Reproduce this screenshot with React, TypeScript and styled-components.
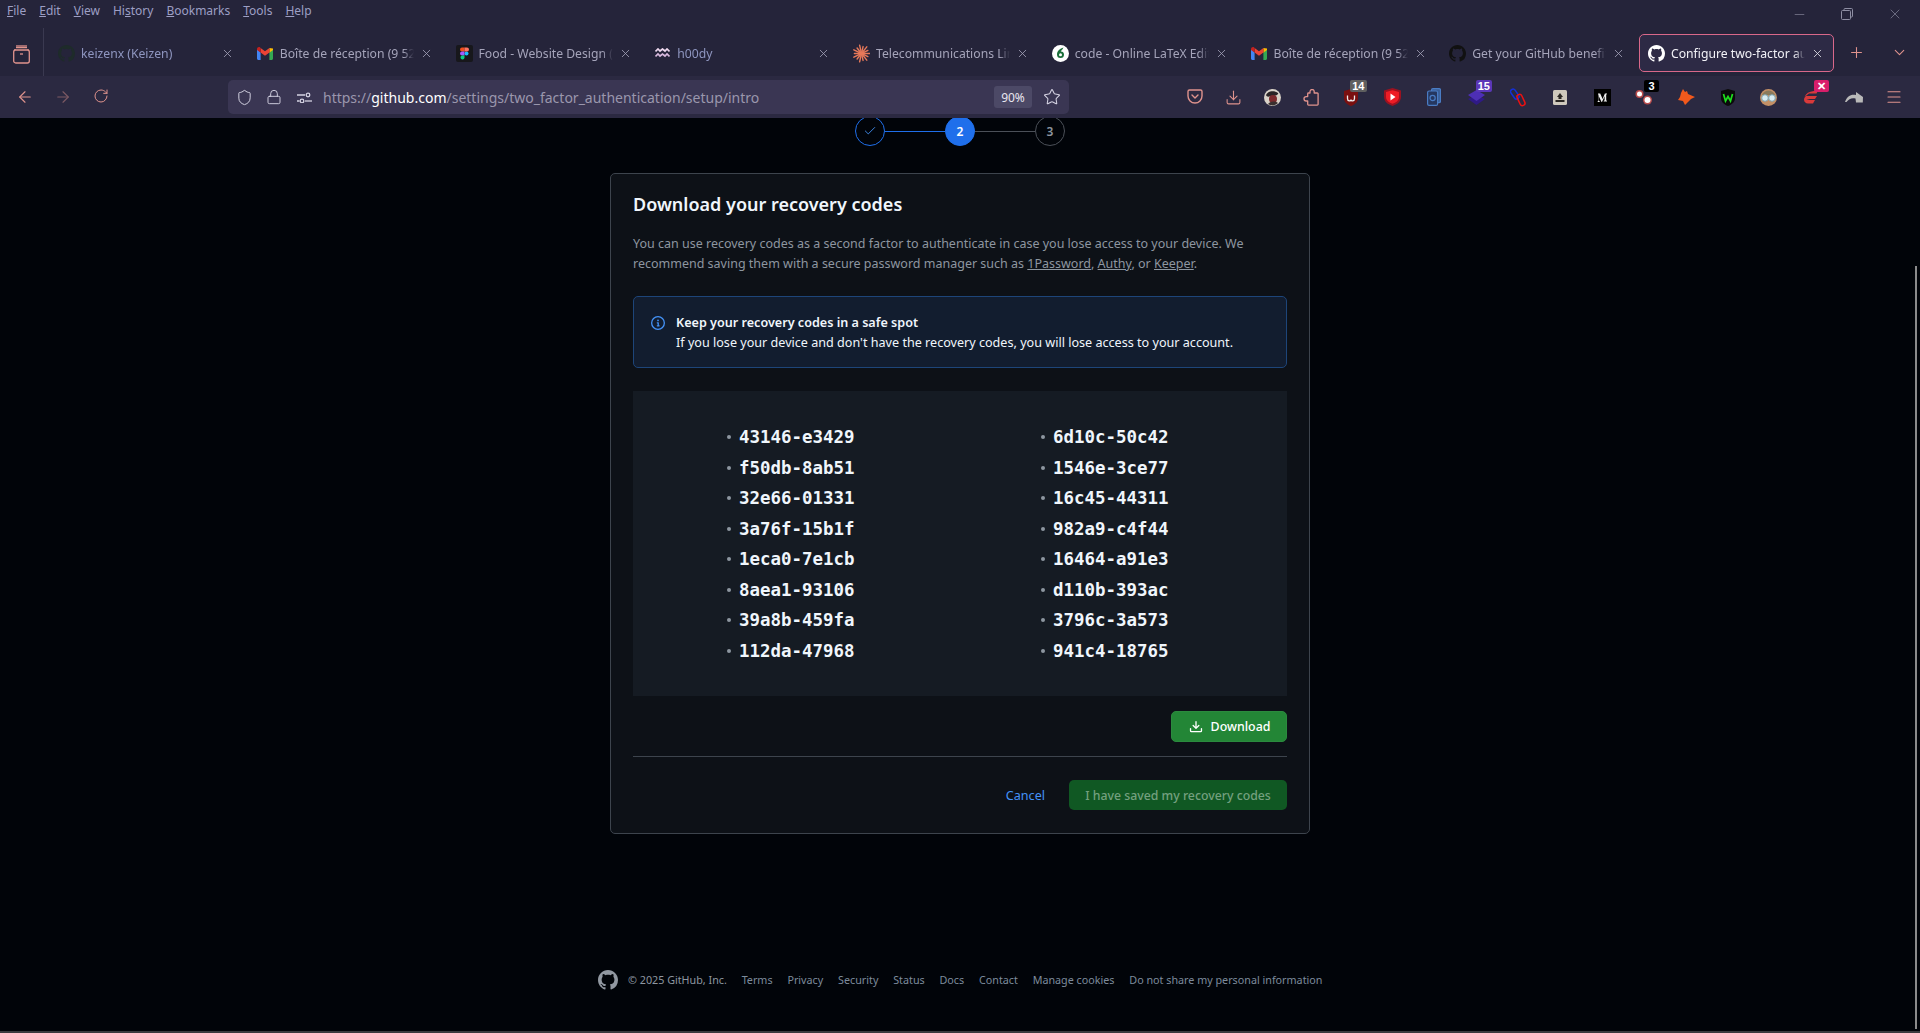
import React from 'react';
import styled, { createGlobalStyle } from 'styled-components';
import { ArrowLeft, ArrowRight, RotateCw, Shield, Lock, Star, Plus, ChevronDown, X, Minus, Menu, Check, Download } from 'lucide-react';

const GITHUB_PATH = 'M8 0C3.58 0 0 3.58 0 8c0 3.54 2.29 6.53 5.47 7.59.4.07.55-.17.55-.38 0-.19-.01-.82-.01-1.49-2.01.37-2.53-.49-2.69-.94-.09-.23-.48-.94-.82-1.13-.28-.15-.68-.52-.01-.53.63-.01 1.08.58 1.23.82.72 1.21 1.87.87 2.33.66.07-.52.28-.87.51-1.07-1.78-.2-3.64-.89-3.64-3.95 0-.87.31-1.59.82-2.15-.08-.2-.36-1.02.08-2.12 0 0 .67-.21 2.2.82.64-.18 1.32-.27 2-.27s1.36.09 2 .27c1.53-1.04 2.2-.82 2.2-.82.44 1.1.16 1.92.08 2.12.51.56.82 1.27.82 2.15 0 3.07-1.87 3.75-3.65 3.95.29.25.54.73.54 1.48 0 1.07-.01 1.93-.01 2.2 0 .21.15.46.55.38A8.01 8.01 0 0 0 16 8c0-4.42-3.58-8-8-8z';

const GlobalStyle = createGlobalStyle`
  html, body {
    margin: 0;
    padding: 0;
    background: #010409;
    overflow: hidden;
  }
  * { box-sizing: border-box; }
`;

const Page = styled.div`
  width: 1920px;
  height: 1033px;
  display: flex;
  flex-direction: column;
  position: relative;
  overflow: hidden;
  font-family: "Noto Sans", "Open Sans", sans-serif;
`;

/* browser chrome */
const Chrome = styled.header`
  position: relative;
  z-index: 2;
  flex: none;
  background: #25243a;
`;

const MenuBar = styled.nav`
  height: 28px;
  display: flex;
  align-items: center;
  padding-left: 7px;
  gap: 13px;
  font-size: 12px;
  color: #9d9fc4;
`;

const MenuItem = styled.span`
  padding-bottom: 8px;
`;

const WindowControls = styled.div`
  margin-left: auto;
  padding-right: 1px;
  display: flex;
  align-items: center;
  color: #8e8ea3;
`;

const WindowButton = styled.span`
  width: 48px;
  display: flex;
  justify-content: center;
`;

const TabRow = styled.div`
  height: 48px;
  display: flex;
  align-items: center;
`;

const SideButton = styled.div`
  width: 44px;
  height: 48px;
  flex: none;
  display: flex;
  align-items: center;
  justify-content: center;
  padding-top: 5px;
  border-right: 1px solid #3a3950;
`;

const Tabs = styled.div`
  display: flex;
  gap: 3.75px;
  padding: 6px 0 4px 5px;
`;

const Tab = styled.div<{ $active?: boolean }>`
  width: 195px;
  height: 38px;
  flex: none;
  display: flex;
  align-items: center;
  gap: 6px;
  padding: 0 9px 0 8px;
  border: 1px solid ${({ $active }) => ($active ? '#d9688a' : 'transparent')};
  border-radius: 5px;
  background: ${({ $active }) => ($active ? '#2d2a45' : 'transparent')};
`;

const Favicon = styled.span`
  width: 17px;
  height: 17px;
  flex: none;
  display: flex;
  align-items: center;
  justify-content: center;
`;

const TabTitle = styled.span<{ $active?: boolean; $blue?: boolean }>`
  flex: 1;
  min-width: 0;
  overflow: hidden;
  white-space: nowrap;
  font-size: 12.2px;
  color: ${({ $active, $blue }) => ($active ? '#f2f2f7' : $blue ? '#8f96c0' : '#a5a4ba')};
  mask-image: linear-gradient(to right, #000 92%, transparent 100%);
`;

const TabClose = styled(X)<{ $active?: boolean }>`
  width: 13px;
  height: 13px;
  flex: none;
  color: ${({ $active }) => ($active ? '#e6e6ee' : '#a5a4ba')};
`;

const TabEnd = styled.div`
  flex: none;
  display: flex;
  align-items: center;
  color: #e0938d;
  padding: 0 0 0 14px;
  gap: 26px;
`;

const Toolbar = styled.div`
  height: 42px;
  display: flex;
  align-items: center;
  background: #2b2941;
  color: #e0938d;
`;

const NavButton = styled.span<{ $dim?: boolean }>`
  width: 38px;
  flex: none;
  display: flex;
  justify-content: center;
  opacity: ${({ $dim }) => ($dim ? 0.45 : 1)};
`;

const NavGroup = styled.div`
  flex: none;
  width: 228px;
  padding-left: 6px;
  display: flex;
`;

const UrlBar = styled.div`
  width: 841px;
  height: 34px;
  flex: none;
  display: flex;
  align-items: center;
  padding: 0 8px 0 1px;
  border-radius: 5px;
  background: #3a3653;
  color: #d5d3e3;
`;

const UrlIcon = styled.span`
  width: 30px;
  flex: none;
  display: flex;
  justify-content: center;
`;

const UrlText = styled.span`
  flex: 1;
  margin-left: 4px;
  font-size: 14px;
  white-space: nowrap;
  color: #9a97ad;
  b { font-weight: 400; color: #fff; }
`;

const ZoomPill = styled.span`
  width: 38px;
  height: 22px;
  display: flex;
  align-items: center;
  justify-content: center;
  border-radius: 3px;
  background: #4c4966;
  font-size: 12px;
  color: #e8e7f0;
  margin-right: 11px;
`;

const Extensions = styled.div`
  flex: none;
  margin-left: 107px;
  display: flex;
  align-items: center;
`;

const Extension = styled.span<{ $w: number }>`
  position: relative;
  width: ${({ $w }) => $w}px;
  height: 30px;
  flex: none;
  display: flex;
  align-items: center;
  justify-content: center;
`;

const Badge = styled.span<{ $bg: string; $right?: number }>`
  position: absolute;
  top: -2px;
  right: ${({ $right }) => $right ?? 3}px;
  min-width: 15px;
  height: 12px;
  padding: 0 2px;
  border-radius: 2px;
  background: ${({ $bg }) => $bg};
  color: #fff;
  font-family: "Liberation Sans", sans-serif;
  font-size: 11px;
  font-weight: 700;
  line-height: 12px;
  text-align: center;
`;

/* github page */
const Main = styled.main`
  flex: 1;
  display: flex;
  flex-direction: column;
  align-items: center;
  background: #010409;
  border-bottom: 2px solid #3a3a3f;
`;

const Stepper = styled.div`
  margin-top: -2px;
  display: flex;
  align-items: center;
`;

const StepCircle = styled.span<{ $state: 'done' | 'current' | 'todo' }>`
  width: 30px;
  height: 30px;
  flex: none;
  display: flex;
  align-items: center;
  justify-content: center;
  border-radius: 50%;
  border: 1px solid ${({ $state }) => ($state === 'todo' ? '#4b5058' : '#1f6feb')};
  background: ${({ $state }) => ($state === 'current' ? '#1f6feb' : 'transparent')};
  color: ${({ $state }) => ($state === 'current' ? '#fff' : $state === 'done' ? '#4493f8' : '#8d96a0')};
  font-size: 12px;
  font-weight: 600;
`;

const StepLine = styled.span<{ $on?: boolean }>`
  width: 60px;
  height: 1px;
  background: ${({ $on }) => ($on ? '#1f6feb' : '#4b5058')};
`;

const Card = styled.section`
  width: 700px;
  margin-top: 27px;
  padding: 19px 22px 23px;
  background: #0d1117;
  border: 1px solid #3d444d;
  border-radius: 5px;
`;

const Heading = styled.h2`
  margin: 0;
  font-size: 18px;
  line-height: 22px;
  font-weight: 600;
  color: #f0f6fc;
`;

const Lead = styled.p`
  margin: 19px 0 0;
  font-size: 12.5px;
  line-height: 20px;
  color: #8d96a0;
  a { color: inherit; text-decoration: underline; }
`;

const InfoBox = styled.div`
  height: 72px;
  margin-top: 22px;
  padding: 16px 17px 14px;
  display: flex;
  gap: 11px;
  background: #121d2f;
  border: 1px solid #1d4579;
  border-radius: 5px;
  font-size: 12.6px;
  line-height: 20px;
  color: #f0f6fc;
  strong { display: block; font-weight: 600; }
`;

const InfoIcon = styled.span`
  width: 14px;
  height: 20px;
  flex: none;
  display: flex;
  align-items: center;
  color: #4493f8;
`;

const CodesBox = styled.ul`
  height: 305px;
  margin: 23px 0 0;
  padding: 30.75px 0 0 95px;
  list-style: none;
  display: grid;
  grid-template-columns: 314px 1fr;
  grid-auto-rows: 30.5px;
  grid-auto-flow: column;
  grid-template-rows: repeat(8, 30.5px);
  background: #151b23;
`;

const Code = styled.li`
  display: flex;
  align-items: center;
  font-family: "DejaVu Sans Mono", "Liberation Mono", monospace;
  font-size: 17.45px;
  font-weight: 700;
  color: #f0f6fc;
  &::before {
    content: '';
    width: 4px;
    height: 4px;
    margin-right: 8px;
    margin-left: -1px;
    border-radius: 50%;
    background: #8d96a0;
  }
`;

const DownloadRow = styled.div`
  margin-top: 15px;
  padding-bottom: 14px;
  display: flex;
  justify-content: flex-end;
  border-bottom: 1px solid #3d444d;
`;

const DownloadButton = styled.button`
  width: 116px;
  height: 31px;
  display: flex;
  align-items: center;
  justify-content: center;
  gap: 8px;
  padding: 0 0 0 1px;
  border: 1px solid #2b8a3e;
  border-radius: 5px;
  background: #238636;
  color: #fff;
  font-family: inherit;
  font-size: 12.4px;
  font-weight: 500;
`;

const ActionRow = styled.div`
  margin-top: 23px;
  display: flex;
  align-items: center;
  justify-content: flex-end;
  gap: 24px;
`;

const CancelLink = styled.a`
  font-size: 12.6px;
  color: #4493f8;
`;

const SavedButton = styled.button`
  width: 218px;
  height: 30px;
  padding: 0;
  border: 0;
  border-radius: 5px;
  background: #105823;
  color: #74a07f;
  font-family: inherit;
  font-size: 12.3px;
  font-weight: 500;
`;

const Footer = styled.footer`
  margin-top: 136px;
  width: 724px;
  height: 20px;
  display: flex;
  align-items: center;
  white-space: nowrap;
  font-size: 10.75px;
  color: #8d96a0;
  svg { flex: none; margin-right: 10px; color: #9198a1; }
`;

const FooterLink = styled.a`
  margin-left: 14.8px;
  color: #7d8b9c;
`;

const Scrollbar = styled.div`
  position: absolute;
  right: 3px;
  top: 266px;
  bottom: 4px;
  width: 2px;
  background: #8b8b8b;
`;

/* drawn icons */
const GithubMark = ({ size = 17, color = 'currentColor' }: { size?: number; color?: string }) => (
  <svg width={size} height={size} viewBox="0 0 16 16" fill={color}><path d={GITHUB_PATH} /></svg>
);

const Gmail = () => (
  <svg width="16" height="13" viewBox="0 0 16 13">
    <path d="M0 2v9.5C0 12.3.7 13 1.500 13H3.600V5.500z" fill="#4285f4" />
    <path d="M16 2v9.500c0 .8-.7 1.500-1.500 1.500h-2.100V5.500z" fill="#34a853" />
    <path d="M12.400 1 16 1.500V3l-3.600 2.700z" fill="#fbbc04" />
    <path d="M3.600 5.500 8 8.800l4.400-3.300V1L8 4.300 3.600 1z" fill="#ea4335" />
    <path d="M0 3V2C0 .4 1.900-.5 3.100.4l.5.6v4.500z" fill="#c5221f" />
  </svg>
);

const FigmaIcon = () => (
  <svg width="17" height="17" viewBox="0 0 17 17">
    <rect width="17" height="17" rx="2" fill="#17171b" />
    <circle cx="10.500" cy="8.500" r="2" fill="#1abcfe" />
    <path d="M6 2.500h2.500v4H6a2 2 0 0 1 0-4z" fill="#f24e1e" />
    <path d="M8.500 2.500H11a2 2 0 0 1 0 4H8.500z" fill="#ff7262" />
    <path d="M6 6.500h2.500v4H6a2 2 0 0 1 0-4z" fill="#a259ff" />
    <path d="M6 10.500h2.500v2a2 2 0 1 1-2.500-2z" fill="#0acf83" />
  </svg>
);

const HoodyIcon = () => (
  <svg width="15" height="10" viewBox="0 0 15 10" fill="none" strokeWidth="1.700">
    <path d="M.5 3.500 3 1l2 2 2.500-2L10 3l2-2 2.500 2.500" stroke="#efd9ef" />
    <path d="M.5 8.500 3 6l2 2 2.500-2L10 8l2-2 2.500 2.500" stroke="#d9b9de" />
  </svg>
);

const SunburstIcon = () => (
  <svg width="17" height="19" viewBox="-9 -10 18 20" stroke="#e8795a" strokeWidth="1.500" strokeLinecap="round">
    {Array.from({ length: 14 }, (_, i) => {
      const a = (i / 14) * Math.PI * 2;
      const r = i % 2 ? 7.5 : 9;
      return <line key={i} x1={0} y1={0} x2={Math.cos(a) * r} y2={Math.sin(a) * r} />;
    })}
  </svg>
);

const OverleafIcon = () => (
  <svg width="17" height="17" viewBox="0 0 17 17">
    <circle cx="8.500" cy="8.500" r="8.500" fill="#fff" />
    <path d="M11.500 2.500C8 3.500 5 6 5 9.500a3.500 3.500 0 0 0 7 0c0-2-1.500-3.200-3.300-3 1-1.300 1.900-2.200 2.800-4z" fill="#1b6f3a" />
    <circle cx="8.500" cy="9.700" r="1.500" fill="#fff" />
  </svg>
);

const SideIcon = () => (
  <svg width="17" height="19" viewBox="0 0 17 19" fill="none" stroke="#e0938d" strokeWidth="1.300">
    <rect x=".7" y="5" width="15.600" height="13" rx="2" />
    <path d="M3 2.600h11M2 5V4M15 5V4" />
    <path d="M3 1h11" />
    <path d="M7 9h3" />
  </svg>
);

const PermissionIcon = () => (
  <svg width="15" height="11" viewBox="0 0 15 11" fill="none" stroke="#d5d3e3" strokeWidth="1.300">
    <path d="M0 3h8M0 9h2.500" />
    <circle cx="11" cy="3" r="1.800" />
    <circle cx="5" cy="9" r="1.800" />
    <path d="M8 9h7" />
  </svg>
);

const PocketIcon = () => (
  <svg width="16" height="16" viewBox="0 0 16 16" fill="none" stroke="#e0938d" strokeWidth="1.400" strokeLinecap="round" strokeLinejoin="round">
    <path d="M1 2.500A1.500 1.500 0 0 1 2.500 1h11A1.500 1.500 0 0 1 15 2.500V7A7 7 0 0 1 1 7z" />
    <path d="m5 6 3 3 3-3" />
  </svg>
);

const PuzzleIcon = () => (
  <svg width="16" height="17" viewBox="0 0 16 17" fill="none" stroke="#e0938d" strokeWidth="1.300" strokeLinejoin="round">
    <path d="M7 4V2.600a2.100 2.100 0 0 1 4.200 0V4h3.100a.8.800 0 0 1 .8.800v10.500a.8.800 0 0 1-.8.800H5.500a.8.800 0 0 1-.8-.8V12H3.200a2.200 2.200 0 0 1 0-4.400h1.500V4.800A.8.800 0 0 1 5.500 4z" />
  </svg>
);

const AvatarIcon = () => (
  <svg width="17" height="17" viewBox="0 0 17 17">
    <circle cx="8.500" cy="8.500" r="8.500" fill="#d9d2c8" />
    <path d="M2 6c2-4 8-5 12-2 1 1-2 3-5 3S3 9 2 6z" fill="#2a2426" />
    <circle cx="9" cy="10" r="4" fill="#7c2a2d" />
    <path d="M4 15c2-3 7-3 10-1-3 3-7 3-10 1z" fill="#3a2f2f" />
  </svg>
);

const UblockIcon = () => (
  <svg width="14" height="17" viewBox="0 0 14 17">
    <path d="M7 0 14 2v7c0 4-3 6.500-7 8-4-1.500-7-4-7-8V2z" fill="#7a1010" />
    <path d="M3.500 6.500v3c0 3 3.500 3 3.500 1 0 2 3.500 2 3.500-1v-3" stroke="#eee" fill="none" strokeWidth="1.300" />
  </svg>
);

const YoutubeShield = () => (
  <svg width="17" height="18" viewBox="0 0 17 18">
    <path d="M8.500 0 17 2.500V9c0 4.500-4 7.500-8.500 9C4 16.500 0 13.500 0 9V2.500z" fill="#9c1220" />
    <path d="M8.500 2.200 15 4v5c0 3.300-3 5.500-6.500 6.800C5 14.500 2 12.300 2 9V4z" fill="#ee1c25" />
    <path d="m6.500 5.500 5 3.500-5 3.500z" fill="#fff" />
  </svg>
);

const BlueStack = () => (
  <svg width="14" height="18" viewBox="0 0 14 18" fill="none" stroke="#4a7cc4" strokeWidth="1.200">
    <rect x="4.500" y=".6" width="9" height="14" rx="1.500" fill="#3a5f98" />
    <rect x=".6" y="3" width="10" height="14.400" rx="1.500" fill="#25375f" />
    <circle cx="5.600" cy="10" r="2.600" />
  </svg>
);

const PurpleStack = () => (
  <svg width="17" height="16" viewBox="0 0 17 16">
    <path d="M8.500 6 17 10l-8.500 6L0 10z" fill="#2f1a86" />
    <path d="M8.500 1 17 6l-8.500 6L0 6z" fill="#4d2fb5" />
  </svg>
);

const LinkIcon = () => (
  <svg width="17" height="19" viewBox="0 0 17 19" fill="none" strokeWidth="1.500">
    <rect x="-1.900" y="-5" width="5" height="11" rx="2.500" transform="translate(4 6) rotate(-35)" stroke="#1430d8" />
    <rect x="-2.500" y="-6" width="5" height="12" rx="2.500" transform="translate(11 12) rotate(-25)" stroke="#ee1111" />
  </svg>
);

const StampIcon = () => (
  <svg width="14" height="15" viewBox="0 0 14 15">
    <rect width="14" height="15" rx="1.500" fill="#cfc8bc" />
    <path d="M7 3 10 7H8.500v2h-3V7H4zM2.500 10h9v2h-9z" fill="#2a2622" />
  </svg>
);

const MediumIcon = () => (
  <svg width="17" height="17" viewBox="0 0 17 17">
    <rect width="17" height="17" fill="#000" />
    <path d="M4 4.500h2.200L8.600 10l2.300-5.500H13v.6l-.8.6v5.600l.8.6v.6H9.700v-.6l.9-.6V7.300L8 13h-.5L4.800 7.300v4.300l1 .8v.6H3.600v-.6l.9-.8V5.900L4 5.100z" fill="#eee" />
  </svg>
);

const DotsIcon = () => (
  <svg width="18" height="16" viewBox="0 0 18 16">
    <circle cx="4.500" cy="5" r="4" fill="#b84b4b" />
    <circle cx="4.500" cy="5" r="2.500" fill="#fff" />
    <circle cx="12.500" cy="11" r="4.500" fill="#b84b4b" />
    <circle cx="12.500" cy="11" r="3" fill="#fff" />
  </svg>
);

const FoxIcon = () => (
  <svg width="17" height="16" viewBox="0 0 17 16">
    <path d="M5 0l2 3 2-1 1 3 7 3-4 2-3 3-3 3-2-4-5-1 2-3 1-4z" fill="#f2591c" />
  </svg>
);

const WShield = () => (
  <svg width="14" height="17" viewBox="0 0 14 17">
    <path d="M7 0 14 2v7c0 4-3 6.500-7 8-4-1.500-7-4-7-8V2z" fill="#0b0b0b" />
    <path d="M2.500 5 4.500 12 7 7.500 9.500 12l2-7" fill="none" stroke="#1ee01e" strokeWidth="1.700" />
  </svg>
);

const GogglesIcon = () => (
  <svg width="17" height="17" viewBox="0 0 17 17">
    <circle cx="8.500" cy="8.500" r="8.500" fill="#c39066" />
    <path d="M2 6c2-6 11-6 13 0z" fill="#8a7a5c" />
    <circle cx="5" cy="9" r="3.300" fill="#d9ecf2" stroke="#7fa7b5" />
    <circle cx="12" cy="9" r="3.300" fill="#d9ecf2" stroke="#7fa7b5" />
  </svg>
);

const RedStripes = () => (
  <svg width="17" height="14" viewBox="0 0 17 14">
    <path d="M3 4.500C5 2 9 .8 15 .5l-1.500 3H6L1.500 7z" fill="#d93a3a" />
    <path d="M3 6h11l-2 3H3.500C5 10 8 10 12 10l-2 3.500H5C1 13.500-.5 9 3 6z" fill="#d93a3a" />
  </svg>
);

const ArrowExt = () => (
  <svg width="18" height="12" viewBox="0 0 18 12">
    <path d="M0 11C2 5 6 3 11 4V1l7 5-.2 5.500H11l-.5-4C7 6.500 4 7.500 1.500 11z" fill="#b9b9b9" />
  </svg>
);

const MENUS: React.ReactNode[] = [
  <><u>F</u>ile</>, <><u>E</u>dit</>, <><u>V</u>iew</>, <>Hi<u>s</u>tory</>,
  <><u>B</u>ookmarks</>, <><u>T</u>ools</>, <><u>H</u>elp</>,
];

const TABS: { title: string; icon: React.ReactNode; blue?: boolean; active?: boolean }[] = [
  { title: 'keizenx (Keizen)', icon: <GithubMark color="#1e2b2a" />, blue: true },
  { title: 'Boîte de réception (9 526) - keizenx', icon: <Gmail /> },
  { title: 'Food - Website Design (Community)', icon: <FigmaIcon /> },
  { title: 'h00dy', icon: <HoodyIcon />, blue: true },
  { title: 'Telecommunications Link Budget', icon: <SunburstIcon /> },
  { title: 'code - Online LaTeX Editor Overleaf', icon: <OverleafIcon /> },
  { title: 'Boîte de réception (9 526) - keizenx', icon: <Gmail /> },
  { title: 'Get your GitHub benefits', icon: <GithubMark color="#111" /> },
  { title: 'Configure two-factor authentication', icon: <GithubMark color="#fff" />, active: true },
];

const EXTENSIONS: { w: number; icon: React.ReactNode; badge?: string; bg?: string; right?: number }[] = [
  { w: 38.5, icon: <PocketIcon /> },
  { w: 38.5, icon: <Download size={17} strokeWidth={1.5} /> },
  { w: 38.5, icon: <AvatarIcon /> },
  { w: 39.5, icon: <PuzzleIcon /> },
  { w: 40.5, icon: <UblockIcon />, badge: '14', bg: '#5f5f5f', right: 5 },
  { w: 41.5, icon: <YoutubeShield /> },
  { w: 42, icon: <BlueStack /> },
  { w: 42, icon: <PurpleStack />, badge: '15', bg: '#5b37b8', right: 5 },
  { w: 42, icon: <LinkIcon /> },
  { w: 42, icon: <StampIcon /> },
  { w: 42, icon: <MediumIcon /> },
  { w: 42, icon: <DotsIcon />, badge: '3', bg: '#000', right: 6 },
  { w: 42, icon: <FoxIcon /> },
  { w: 41, icon: <WShield /> },
  { w: 41, icon: <GogglesIcon /> },
  { w: 44, icon: <RedStripes />, badge: '✕', bg: '#d81e6a', right: 4 },
  { w: 41, icon: <ArrowExt /> },
  { w: 39, icon: <Menu size={18} strokeWidth={1.5} /> },
];

const CODES = [
  '43146-e3429', 'f50db-8ab51', '32e66-01331', '3a76f-15b1f',
  '1eca0-7e1cb', '8aea1-93106', '39a8b-459fa', '112da-47968',
  '6d10c-50c42', '1546e-3ce77', '16c45-44311', '982a9-c4f44',
  '16464-a91e3', 'd110b-393ac', '3796c-3a573', '941c4-18765',
];

const FOOTER_LINKS = ['Terms', 'Privacy', 'Security', 'Status', 'Docs', 'Contact', 'Manage cookies', 'Do not share my personal information'];

export default function App() {
  return (
    <Page>
      <GlobalStyle />
      <Chrome>
        <MenuBar>
          {MENUS.map((m, i) => <MenuItem key={i}>{m}</MenuItem>)}
          <WindowControls>
            <WindowButton><Minus size={15} strokeWidth={1} /></WindowButton>
            <WindowButton>
              <svg width="12" height="12" viewBox="0 0 12 12" fill="none" stroke="currentColor"><rect x=".5" y="2.500" width="9" height="9" rx="1" /><path d="M3 2.500V1.500a1 1 0 0 1 1-1h6.500a1 1 0 0 1 1 1V8a1 1 0 0 1-1 1h-1" /></svg>
            </WindowButton>
            <WindowButton><X size={16} strokeWidth={1} /></WindowButton>
          </WindowControls>
        </MenuBar>
        <TabRow>
          <SideButton><SideIcon /></SideButton>
          <Tabs>
            {TABS.map((t, i) => (
              <Tab key={i} $active={t.active}>
                <Favicon>{t.icon}</Favicon>
                <TabTitle $active={t.active} $blue={t.blue}>{t.title}</TabTitle>
                <TabClose $active={t.active} strokeWidth={1.5} />
              </Tab>
            ))}
          </Tabs>
          <TabEnd>
            <Plus size={17} strokeWidth={1.5} />
            <ChevronDown size={17} strokeWidth={1.5} />
          </TabEnd>
        </TabRow>
        <Toolbar>
          <NavGroup>
            <NavButton><ArrowLeft size={18} strokeWidth={1.5} /></NavButton>
            <NavButton $dim><ArrowRight size={18} strokeWidth={1.5} /></NavButton>
            <NavButton><RotateCw size={16} strokeWidth={1.5} /></NavButton>
          </NavGroup>
          <UrlBar>
            <UrlIcon><Shield size={17} strokeWidth={1.4} /></UrlIcon>
            <UrlIcon><Lock size={16} strokeWidth={1.4} /></UrlIcon>
            <UrlIcon><PermissionIcon /></UrlIcon>
            <UrlText>https://<b>github.com</b>/settings/two_factor_authentication/setup/intro</UrlText>
            <ZoomPill>90%</ZoomPill>
            <Star size={18} strokeWidth={1.4} />
          </UrlBar>
          <Extensions>
            {EXTENSIONS.map((e, i) => (
              <Extension key={i} $w={e.w}>
                {e.icon}
                {e.badge && <Badge $bg={e.bg ?? '#555'} $right={e.right}>{e.badge}</Badge>}
              </Extension>
            ))}
          </Extensions>
        </Toolbar>
      </Chrome>

      <Main>
        <Stepper>
          <StepCircle $state="done"><Check size={14} strokeWidth={1.5} /></StepCircle>
          <StepLine $on />
          <StepCircle $state="current">2</StepCircle>
          <StepLine />
          <StepCircle $state="todo">3</StepCircle>
        </Stepper>

        <Card>
          <Heading>Download your recovery codes</Heading>
          <Lead>
            You can use recovery codes as a second factor to authenticate in case you lose access to your device. We
            recommend saving them with a secure password manager such as <a>1Password</a>, <a>Authy</a>, or <a>Keeper</a>.
          </Lead>
          <InfoBox>
            <InfoIcon>
              <svg width="14" height="14" viewBox="0 0 16 16" fill="currentColor"><path d="M0 8a8 8 0 1 1 16 0A8 8 0 0 1 0 8Zm8-6.500a6.500 6.500 0 1 0 0 13 6.500 6.500 0 0 0 0-13ZM6.500 7.750A.75.75 0 0 1 7.250 7h1a.75.75 0 0 1 .75.75v2.750h.25a.75.75 0 0 1 0 1.500h-2a.75.75 0 0 1 0-1.500h.25v-2h-.25a.75.75 0 0 1-.75-.75ZM8 6a1 1 0 1 1 0-2 1 1 0 0 1 0 2Z" /></svg>
            </InfoIcon>
            <div>
              <strong>Keep your recovery codes in a safe spot</strong>
              If you lose your device and don't have the recovery codes, you will lose access to your account.
            </div>
          </InfoBox>
          <CodesBox>
            {CODES.map((c) => <Code key={c}>{c}</Code>)}
          </CodesBox>
          <DownloadRow>
            <DownloadButton>
              <svg width="14" height="14" viewBox="0 0 16 16" fill="currentColor"><path d="M2.750 14A1.750 1.750 0 0 1 1 12.250v-2.500a.75.75 0 0 1 1.500 0v2.500c0 .138.112.25.25.25h10.500a.25.25 0 0 0 .25-.25v-2.500a.75.75 0 0 1 1.500 0v2.500A1.750 1.750 0 0 1 13.250 14Z" /><path d="M7.250 7.689V2a.75.75 0 0 1 1.500 0v5.689l1.970-1.969a.749.749 0 1 1 1.060 1.060l-3.250 3.250a.749.749 0 0 1-1.060 0L4.220 6.780a.749.749 0 1 1 1.060-1.060l1.970 1.969Z" /></svg>
              Download
            </DownloadButton>
          </DownloadRow>
          <ActionRow>
            <CancelLink>Cancel</CancelLink>
            <SavedButton disabled>I have saved my recovery codes</SavedButton>
          </ActionRow>
        </Card>

        <Footer>
          <GithubMark size={20} />
          <span>© 2025 GitHub, Inc.</span>
          {FOOTER_LINKS.map((l) => <FooterLink key={l}>{l}</FooterLink>)}
        </Footer>
      </Main>
      <Scrollbar />
    </Page>
  );
}
